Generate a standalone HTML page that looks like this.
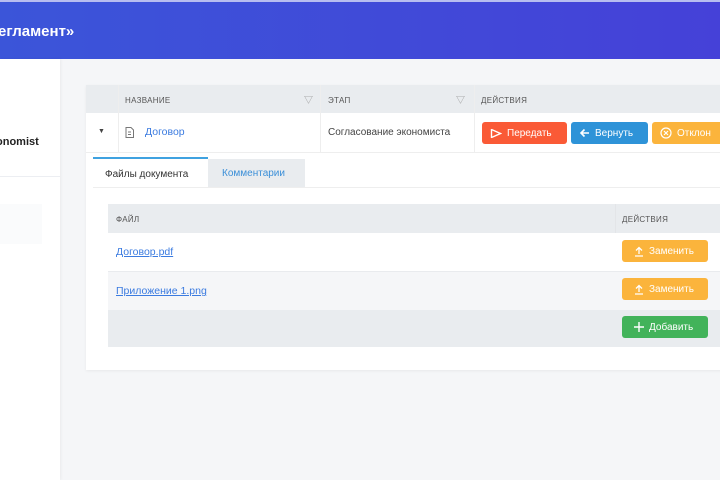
<!DOCTYPE html>
<html><head><meta charset="utf-8"><style>
*{box-sizing:border-box;margin:0;padding:0}
body{width:720px;height:480px;overflow:hidden;background:#f5f6f8;font-family:"Liberation Sans","Noto Sans CJK SC",sans-serif;position:relative}
.hdr{position:absolute;left:0;top:0;width:720px;height:59px;background:linear-gradient(90deg,#3b55d9,#4541d8);border-top:2px solid #b7bdf0}
.hdr span{position:absolute;left:-2px;top:21px;color:#fff;font-weight:bold;font-size:15px}
.side{position:absolute;left:0;top:59px;width:60px;height:421px;background:#fff;box-shadow:1px 0 3px rgba(0,0,0,.05)}
.side .n{position:absolute;left:-4px;top:77px;font-size:11px;font-weight:bold;color:#222}
.side .l{position:absolute;left:0;top:117px;width:60px;height:1px;background:#eceef2}
.side .g{position:absolute;left:0;top:145px;width:42px;height:40px;background:#fafbfc}
.a{position:absolute}
.card{left:86px;top:85px;width:640px;height:285px;background:#fff;box-shadow:0 1px 3px rgba(0,0,0,.06)}
.th{background:#e9ecef;font-size:8px;color:#555;letter-spacing:.3px}
.btn{position:absolute;height:22px;border-radius:3px;color:#fff;font-size:10px;display:flex;align-items:center;padding-left:8px;gap:5px}
.lnk{color:#3b7be0;text-decoration:underline;font-size:10.5px}
</style></head><body>
<div class="hdr"><span>егламент»</span></div>
<div class="side"><div class="n">onomist</div><div class="l"></div><div class="g"></div></div>
<div class="a card"></div>
<div class="a th" style="left:86px;top:85px;width:634px;height:28px"></div>
<div class="a" style="left:118px;top:85px;width:1px;height:67px;background:#eee"></div>
<div class="a" style="left:320px;top:85px;width:1px;height:67px;background:#eee"></div>
<div class="a" style="left:474px;top:85px;width:1px;height:67px;background:#eee"></div>
<div class="a th" style="left:125px;top:96px;background:none">НАЗВАНИЕ</div>
<div class="a" style="left:304px;top:93px;font-size:9px;color:#999">▽</div>
<div class="a th" style="left:328px;top:96px;background:none">ЭТАП</div>
<div class="a" style="left:456px;top:93px;font-size:9px;color:#999">▽</div>
<div class="a th" style="left:481px;top:96px;background:none">ДЕЙСТВИЯ</div>
<div class="a" style="left:98px;top:128px;font-size:7px;color:#444">▼</div>
<svg class="a" style="left:125px;top:127px" width="9" height="11" viewBox="0 0 9 11"><path d="M1 .5h5l2.5 2.5v7.5h-7.5z" fill="none" stroke="#777"/><path d="M3 5h3M3 7.5h3" stroke="#777"/></svg>
<div class="a" style="left:145px;top:126px;font-size:10.5px;color:#3b7be0">Договор</div>
<div class="a" style="left:328px;top:127px;font-size:10px;color:#444">Согласование экономиста</div>
<div class="btn" style="left:482px;top:122px;width:85px;background:#fa5a36"><svg width="12" height="11" viewBox="0 0 12 11"><path d="M1.5 1v9M1.5 1.5l9 4-9 4" fill="none" stroke="#fff" stroke-width="1.4"/></svg>Передать</div>
<div class="btn" style="left:571px;top:122px;width:77px;background:#2e93d8"><svg width="11" height="10" viewBox="0 0 11 10"><path d="M10 5H2M5.5 1.5L2 5l3.5 3.5" fill="none" stroke="#fff" stroke-width="1.6"/></svg>Вернуть</div>
<div class="btn" style="left:652px;top:122px;width:80px;background:#fbb43c"><svg width="12" height="12" viewBox="0 0 12 12"><circle cx="6" cy="6" r="5" fill="none" stroke="#fff" stroke-width="1.2"/><path d="M4 4l4 4M8 4l-4 4" stroke="#fff" stroke-width="1.2"/></svg>Отклон</div>
<div class="a" style="left:86px;top:152px;width:634px;height:1px;background:#eee"></div>
<div class="a" style="left:93px;top:157px;width:115px;height:31px;border-top:2px solid #3fa2e0;background:#fff;font-size:10px;color:#333;padding:10px 0 0 12px">Файлы документа</div>
<div class="a" style="left:208px;top:159px;width:97px;height:29px;background:#e9ecef;font-size:10px;color:#3b8fd8;padding:9px 0 0 14px">Комментарии</div>
<div class="a" style="left:93px;top:187px;width:627px;height:1px;background:#eee"></div>
<div class="a th" style="left:108px;top:204px;width:612px;height:29px"></div>
<div class="a th" style="left:116px;top:215px;background:none">ФАЙЛ</div>
<div class="a th" style="left:622px;top:215px;background:none">ДЕЙСТВИЯ</div>
<div class="a" style="left:615px;top:204px;width:1px;height:143px;background:#e3e5e8"></div>
<div class="a" style="left:108px;top:233px;width:612px;height:38px;background:#fff"></div>
<div class="a" style="left:108px;top:271px;width:612px;height:39px;background:#f5f6f8;border-top:1px solid #e9ebee"></div>
<div class="a" style="left:108px;top:310px;width:612px;height:37px;background:#e9ecef"></div>
<div class="a lnk" style="left:116px;top:246px">Договор.pdf</div>
<div class="a lnk" style="left:116px;top:285px">Приложение 1.png</div>
<div class="btn" style="left:622px;top:240px;width:86px;background:#fbb43c;padding-left:12px"><svg width="10" height="11" viewBox="0 0 10 11"><path d="M5 8V1.5M2 4.5l3-3 3 3M1 10h8" fill="none" stroke="#fff" stroke-width="1.3"/></svg>Заменить</div>
<div class="btn" style="left:622px;top:278px;width:86px;background:#fbb43c;padding-left:12px"><svg width="10" height="11" viewBox="0 0 10 11"><path d="M5 8V1.5M2 4.5l3-3 3 3M1 10h8" fill="none" stroke="#fff" stroke-width="1.3"/></svg>Заменить</div>
<div class="btn" style="left:622px;top:316px;width:86px;background:#42b35a;padding-left:12px"><svg width="10" height="10" viewBox="0 0 10 10"><path d="M5 0v10M0 5h10" stroke="#fff" stroke-width="1.4"/></svg>Добавить</div>
</body></html>
